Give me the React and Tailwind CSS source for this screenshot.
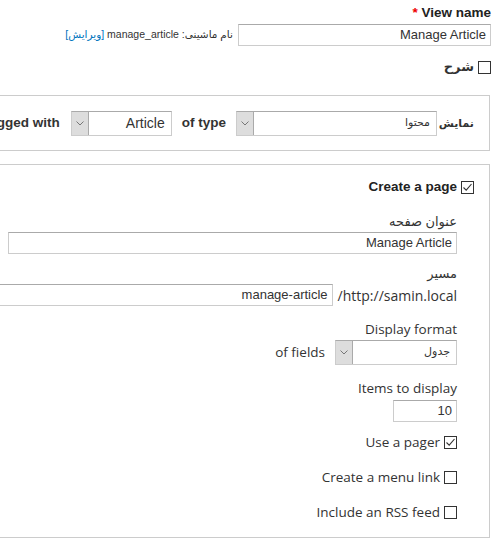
import React from "react";

const SANS = "[font-family:'Open_Sans','DejaVu_Sans',sans-serif]";
const ARIAL = "[font-family:'Liberation_Sans','DejaVu_Sans',sans-serif]";

function Checkbox({ checked }) {
  return (
    <span className="inline-flex w-[13px] h-[13px] shrink-0 border border-[#333] bg-white items-center justify-center">
      {checked && (
        <svg width="11" height="11" viewBox="0 0 11 11" fill="none">
          <path d="M1.5 5.5 L4.2 8.2 L9.5 2" stroke="#333" strokeWidth="1.1" />
        </svg>
      )}
    </span>
  );
}

function Select({ value, width, small }) {
  return (
    <div
      className={`flex h-[25px] border border-[#ccc] border-t-[#aaa] bg-white font-normal ${width}`}
    >
      <span
        className={`flex-1 flex items-center px-[6px] text-[#333] ${
          small ? "text-[11px] [font-family:'DejaVu_Sans',sans-serif]" : `text-[14px] ${ARIAL}`
        }`}
      >
        {value}
      </span>
      <span className="w-[17px] flex items-center justify-center bg-[#ddd] border-r border-[#aaa]">
        <svg width="8" height="5" viewBox="0 0 8 5" fill="none">
          <path d="M0.5 0.5 L4 4 L7.5 0.5" stroke="#777" strokeWidth="1" />
        </svg>
      </span>
    </div>
  );
}

function TextBox({ value, width }) {
  return (
    <div
      className={`h-[22px] flex items-center px-[4px] border border-[#ccc] border-t-[#aaa] bg-white text-[13px] text-[#333] shrink-0 ${ARIAL} ${width}`}
    >
      {value}
    </div>
  );
}

function CheckRow({ label, checked, className = "" }) {
  return (
    <div className={`flex items-center gap-[4px] h-[18px] text-[13.5px] text-[#333] ${SANS} ${className}`}>
      <Checkbox checked={checked} />
      <span>{label}</span>
    </div>
  );
}

export default function App() {
  return (
    <div dir="rtl" className="w-[496px] h-[540px] overflow-hidden bg-white text-[#333]">
      <div className="pr-[5px] pt-[4px]">
        <div className={`h-[18px] leading-[18px] font-bold text-[13.5px] text-[#222] ${ARIAL}`}>
          View name <span className="text-[#e00]">*</span>
        </div>
        <div className="flex items-center gap-[5px] mt-[2px]">
          <TextBox value="Manage Article" width="w-[253px]" />
          <span className={`text-[10.5px] text-[#333] whitespace-nowrap ${ARIAL}`}>
            نام ماشینی: manage_article <a className="text-[#0074bd]">[ویرایش]</a>
          </span>
        </div>
        <div className={`flex items-center gap-[4px] h-[18px] mt-[12px] font-bold text-[13px] ${ARIAL}`}>
          <Checkbox />
          <span>شرح</span>
        </div>
      </div>

      <div className="mt-[19px] mr-[6px] w-[900px] h-[56px] border border-[#ccc] flex items-center pr-[15px] font-bold text-[13.5px] whitespace-nowrap">
        <span className={`w-[37px] shrink-0 text-[11px] ${ARIAL}`}>نمایش</span>
        <Select value="محتوا" width="w-[201px]" small />
        <span className={`mx-[10px] ${ARIAL}`}>of type</span>
        <Select value="Article" width="w-[101px]" />
        <span className={`mr-[11px] ${ARIAL}`}>tagged with</span>
      </div>

      <div className="mt-[13px] mr-[6px] w-[900px] h-[374px] border border-[#ccc] pr-[15px] pt-[13px]">
        <div className={`flex items-center gap-[4px] h-[18px] font-bold text-[13.5px] text-[#222] ${ARIAL}`}>
          <Checkbox checked />
          <span>Create a page</span>
        </div>

        <div className="pr-[17px]">
          <div className={`mt-[16px] h-[18px] leading-[18px] text-[13px] ${SANS}`}>عنوان صفحه</div>
          <div className="mt-[2px]">
            <TextBox value="Manage Article" width="w-[449px]" />
          </div>

          <div className={`mt-[10px] h-[18px] leading-[18px] text-[13px] ${SANS}`}>مسیر</div>
          <div className="mt-[2px] flex items-center gap-[5px]">
            <span className={`text-[14px] whitespace-nowrap ${SANS}`}>http://samin.local/</span>
            <div dir="ltr">
              <TextBox value="manage-article" width="w-[449px] justify-end" />
            </div>
          </div>

          <div className={`mt-[14px] h-[18px] leading-[18px] text-[13.5px] ${SANS}`}>Display format</div>
          <div className="mt-[2px] flex items-center gap-[10px]">
            <Select value="جدول" width="w-[122px] h-[24px]" small />
            <span className={`text-[13.5px] whitespace-nowrap ${SANS}`}>of fields</span>
          </div>

          <div className={`mt-[14px] h-[18px] leading-[18px] text-[13.5px] ${SANS}`}>Items to display</div>
          <div className="mt-[3px]">
            <TextBox value="10" width="w-[64px]" />
          </div>

          <CheckRow label="Use a pager" checked className="mt-[11px]" />
          <CheckRow label="Create a menu link" className="mt-[17px]" />
          <CheckRow label="Include an RSS feed" className="mt-[17px]" />
        </div>
      </div>
    </div>
  );
}
